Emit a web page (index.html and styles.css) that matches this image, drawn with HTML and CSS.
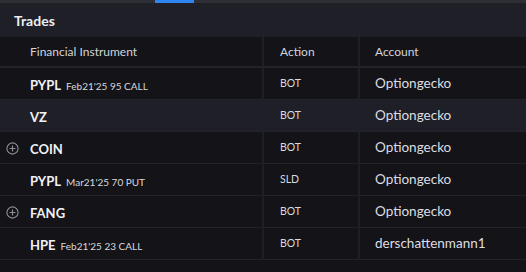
FILE: index.html
```html
<!DOCTYPE html>
<html lang="en">
<head>
    <meta charset="UTF-8">
    <meta name="viewport" content="width=device-width, initial-scale=1.0">
    <title>Trades</title>
    <link rel="stylesheet" href="styles.css">
</head>
<body>
    <div class="tabbar">
        <div class="tab-active"></div>
    </div>

    <div class="panel">
        <div class="panel-header">
            <h2>Trades</h2>
        </div>

        <table class="trades">
            <colgroup>
                <col class="col-instrument">
                <col class="col-action">
                <col class="col-account">
            </colgroup>
            <thead>
                <tr>
                    <th class="instrument">Financial Instrument</th>
                    <th class="action">Action</th>
                    <th class="account">Account</th>
                </tr>
            </thead>
            <tbody>
                <tr>
                    <td class="instrument"><span class="symbol">PYPL</span><span class="contract">Feb21'25 95 CALL</span></td>
                    <td class="action">BOT</td>
                    <td class="account">Optiongecko</td>
                </tr>
                <tr class="hover">
                    <td class="instrument"><span class="symbol">VZ</span></td>
                    <td class="action">BOT</td>
                    <td class="account">Optiongecko</td>
                </tr>
                <tr>
                    <td class="instrument">
                        <svg class="expand" width="13" height="13" viewBox="0 0 13 13">
                            <circle cx="6.5" cy="6.5" r="5.6" fill="none" stroke="#8e8f95" stroke-width="1.1"/>
                            <path d="M6.5 3.6v5.8M3.6 6.5h5.8" stroke="#8e8f95" stroke-width="1.1"/>
                        </svg>
                        <span class="symbol">COIN</span>
                    </td>
                    <td class="action">BOT</td>
                    <td class="account">Optiongecko</td>
                </tr>
                <tr>
                    <td class="instrument"><span class="symbol">PYPL</span><span class="contract">Mar21'25 70 PUT</span></td>
                    <td class="action">SLD</td>
                    <td class="account">Optiongecko</td>
                </tr>
                <tr>
                    <td class="instrument">
                        <svg class="expand" width="13" height="13" viewBox="0 0 13 13">
                            <circle cx="6.5" cy="6.5" r="5.6" fill="none" stroke="#8e8f95" stroke-width="1.1"/>
                            <path d="M6.5 3.6v5.8M3.6 6.5h5.8" stroke="#8e8f95" stroke-width="1.1"/>
                        </svg>
                        <span class="symbol">FANG</span>
                    </td>
                    <td class="action">BOT</td>
                    <td class="account">Optiongecko</td>
                </tr>
                <tr>
                    <td class="instrument"><span class="symbol">HPE</span><span class="contract">Feb21'25 23 CALL</span></td>
                    <td class="action">BOT</td>
                    <td class="account">derschattenmann1</td>
                </tr>
            </tbody>
        </table>
    </div>
</body>
</html>
```

FILE: styles.css
```css
* {
    box-sizing: border-box;
}

body {
    margin: 0;
    background: #131318;
    color: #e6e7eb;
    font-family: Lato, 'Noto Sans', sans-serif;
}

.tabbar {
    height: 3px;
    background: #2e2f35;
    position: relative;
}

.tab-active {
    position: absolute;
    left: 155px;
    top: 0;
    width: 39px;
    height: 3px;
    background: #2f86f0;
}

.panel-header {
    background: #1e1f27;
    height: 34px;
    padding: 0 14px;
    display: flex;
    align-items: center;
}

.panel-header h2 {
    margin: 0;
    font-size: 14px;
    font-weight: 700;
    color: #eceef2;
}

.trades {
    width: 100%;
    border-collapse: collapse;
    table-layout: fixed;
}

.col-instrument {
    width: 263px;
}

.col-action {
    width: 96px;
}

.trades th {
    height: 30px;
    padding: 0;
    text-align: left;
    font-size: 12px;
    font-weight: 400;
    color: #d2d4da;
    background: #131318;
    border-bottom: 2px solid #23242b;
}

.trades td {
    height: 32px;
    padding: 0;
    border-bottom: 1px solid #23242b;
}

.trades th + th,
.trades td + td {
    border-left: 2px solid #1f2027;
}

.trades tr.hover td {
    background: #1e1f27;
}

.instrument {
    position: relative;
    padding-left: 30px !important;
    white-space: nowrap;
}

.expand {
    position: absolute;
    left: 6px;
    top: 10px;
}

.symbol {
    font-size: 13px;
    font-weight: 700;
    color: #f1f2f5;
}

.contract {
    margin-left: 5px;
    font-size: 10px;
    color: #d8dade;
}

.action {
    padding-left: 16px !important;
}

td.action {
    font-size: 10.5px;
    color: #d8dade;
}

.account {
    padding-left: 15px !important;
}

td.account {
    font-size: 13.5px;
    color: #dcdee3;
}
```
